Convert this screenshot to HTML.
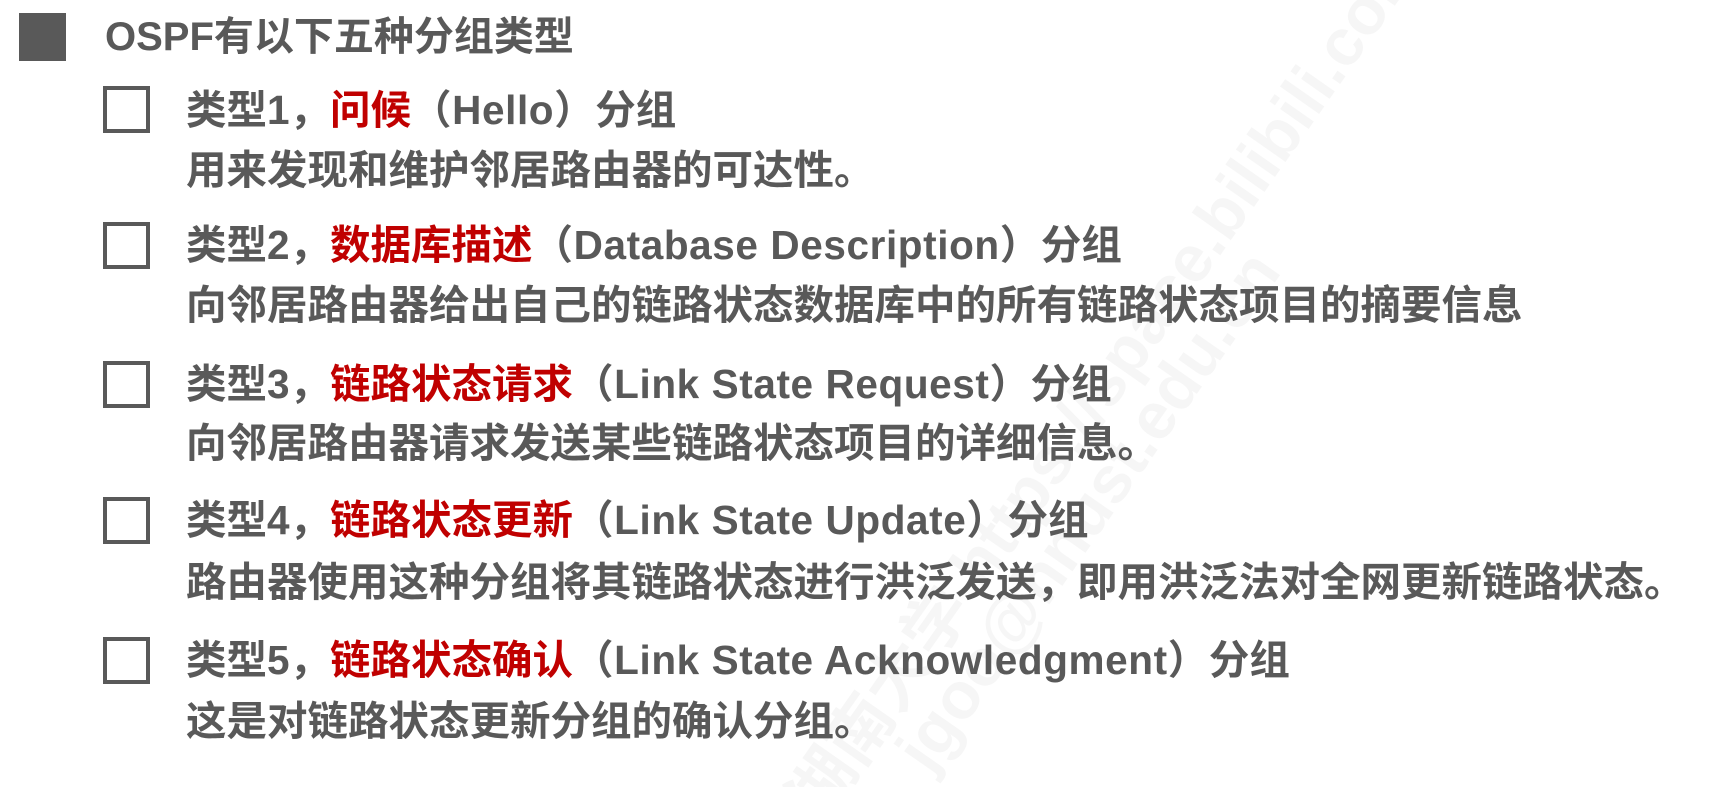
<!DOCTYPE html>
<html><head><meta charset="utf-8"><style>
html,body{margin:0;padding:0;background:#fff;width:1728px;height:787px;overflow:hidden;position:relative}
.t{position:absolute;font-family:"Liberation Sans","Noto Sans CJK SC",sans-serif;font-weight:bold;color:#595959;font-size:40.5px;line-height:42px;white-space:nowrap}
.l{letter-spacing:0.6px}
.r{color:#c00000}
.sq{position:absolute;left:19px;top:13px;width:47px;height:48px;background:#595959}
.cb{position:absolute;left:103px;width:39px;height:39px;border:4px solid #595959}
.wrap{position:absolute;left:0;top:0;width:1728px;height:787px;overflow:hidden}
.wm{position:absolute;font-family:"Liberation Sans","Noto Sans CJK SC",sans-serif;font-weight:bold;color:rgba(0,0,0,0.035);font-size:66px;transform:rotate(-55deg);transform-origin:left top;white-space:nowrap}
</style></head><body>
<div class="wrap">
<div class="wm" style="left:760px;top:780px">湖南大学 https://space.bilibili.com/360996402</div>
<div class="wm" style="left:880px;top:740px">jgoo@hnust.edu.cn</div>
</div>
<div class="sq"></div>
<div class="t" style="left:105px;top:16px;font-size:40px">OSPF有以下五种分组类型</div>

<div class="cb" style="top:86px"></div>
<div class="t" style="left:186px;top:89px">类型1，<span class="r">问候</span><span class="l">（Hello）</span>分组</div>
<div class="t" style="left:186px;top:149px">用来发现和维护邻居路由器的可达性。</div>

<div class="cb" style="top:222px"></div>
<div class="t" style="left:186px;top:224px">类型2，<span class="r">数据库描述</span><span class="l">（Database Description）</span>分组</div>
<div class="t" style="left:186px;top:284px">向邻居路由器给出自己的链路状态数据库中的所有链路状态项目的摘要信息</div>

<div class="cb" style="top:361px"></div>
<div class="t" style="left:186px;top:363px">类型3，<span class="r">链路状态请求</span><span class="l">（Link State Request）</span>分组</div>
<div class="t" style="left:186px;top:422px">向邻居路由器请求发送某些链路状态项目的详细信息。</div>

<div class="cb" style="top:497px"></div>
<div class="t" style="left:186px;top:499px">类型4，<span class="r">链路状态更新</span><span class="l">（Link State Update）</span>分组</div>
<div class="t" style="left:186px;top:561px">路由器使用这种分组将其链路状态进行洪泛发送，即用洪泛法对全网更新链路状态。</div>

<div class="cb" style="top:637px"></div>
<div class="t" style="left:186px;top:639px">类型5，<span class="r">链路状态确认</span><span class="l">（Link State Acknowledgment）</span>分组</div>
<div class="t" style="left:186px;top:700px">这是对链路状态更新分组的确认分组。</div>
</body></html>
